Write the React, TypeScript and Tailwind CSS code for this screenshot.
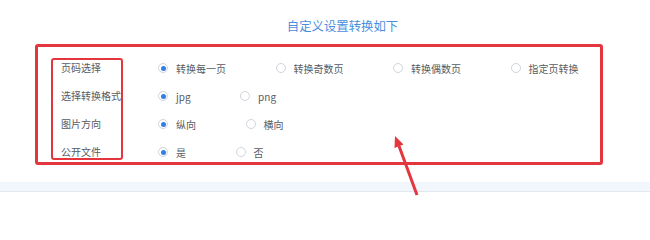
import React from "react";

type Row = { label: string; options: string[] };

const rows: Row[] = [
  { label: "页码选择", options: ["转换每一页", "转换奇数页", "转换偶数页", "指定页转换"] },
  { label: "选择转换格式", options: ["jpg", "png"] },
  { label: "图片方向", options: ["纵向", "横向"] },
  { label: "公开文件", options: ["是", "否"] },
];

function Radio({ checked }: { checked: boolean }) {
  return (
    <span className="w-[10px] h-[10px] rounded-full border border-[#d0d5dc] bg-white flex items-center justify-center shrink-0">
      {checked && <span className="w-[5px] h-[5px] rounded-full bg-[#2f7fe6]" />}
    </span>
  );
}

export default function App() {
  return (
    <div
      className="relative w-[650px] h-[203px] bg-white overflow-hidden"
      style={{ fontFamily: "'Noto Sans CJK SC', 'Liberation Sans', sans-serif" }}
    >
      <div className="pl-[35px] pt-[18px] mb-[10px] flex justify-center">
        <span className="text-[12.4px] leading-[16px] text-[#4a8fdd]">自定义设置转换如下</span>
      </div>

      <div className="ml-[35px] w-[568px] border-[3px] border-[#e3363f] rounded-[3px] pl-[13px] pt-[11px] pb-[2.5px] flex items-start">
        <div className="w-[74px] border-[2.5px] border-[#e3363f] rounded-[3px] pl-[8px] pt-[1.5px] flex flex-col gap-[16px]">
          {rows.map((r) => (
            <div key={r.label} className="h-[12px] flex items-center text-[10px] text-[#575b62] whitespace-nowrap">
              {r.label}
            </div>
          ))}
        </div>

        <div className="ml-[35px] pt-[4px] flex flex-col gap-[16px]">
          {rows.map((r) => (
            <div key={r.label} className="h-[12px] flex items-center">
              {r.options.map((o, i) => (
                <label key={o} className="flex items-center gap-[8px] mr-[49.5px] text-[10px] text-[#575b62] whitespace-nowrap">
                  <Radio checked={i === 0} />
                  <span>{o}</span>
                </label>
              ))}
            </div>
          ))}
        </div>
      </div>

      <div className="mt-[17px] h-[10px] bg-[#f2f7fd] border-b border-[#e2e7ee]" />

      <svg className="absolute left-0 top-0 pointer-events-none" width="650" height="203">
        <line x1="399" y1="146" x2="417" y2="195" stroke="#e3363f" strokeWidth="3" />
        <polygon points="395,136 403.5,144.5 394.5,148" fill="#e3363f" />
      </svg>
    </div>
  );
}
